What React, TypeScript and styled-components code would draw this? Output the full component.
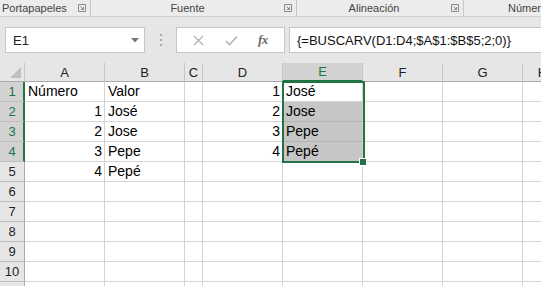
import React from 'react'
import styled, { createGlobalStyle } from 'styled-components'

const GREEN = '#217346'

const Global = createGlobalStyle`
  html, body {
    margin: 0;
    padding: 0;
    background: #e6e6e6;
    overflow: hidden;
  }
  body {
    font-family: "Liberation Sans", Arial, sans-serif;
  }
`

const Screen = styled.div`
  width: 541px;
  height: 286px;
  display: flex;
  flex-direction: column;
  background: #e6e6e6;
  overflow: hidden;
`

const RibbonLabels = styled.div`
  display: flex;
  height: 16px;
  border-bottom: 1px solid #d0d0d0;
  background: #ececec;
  flex-shrink: 0;
`

const Group = styled.div<{ $w: number }>`
  width: ${p => p.$w}px;
  flex-shrink: 0;
  display: flex;
  align-items: center;
  height: 100%;
  border-right: 1px solid #c8c8c8;
  box-sizing: border-box;
  padding-right: 4px;
  &:last-child {
    border-right: none;
  }
`

const GroupLabel = styled.span<{ $left?: boolean; $indent?: number }>`
  flex: 1;
  font-size: 11px;
  color: #444;
  text-align: ${p => (p.$left ? 'left' : 'center')};
  padding-left: ${p => p.$indent ?? 0}px;
  white-space: nowrap;
  line-height: 14px;
`

const Launcher = () => (
  <svg width="8" height="8" viewBox="0 0 8 8" style={{ flexShrink: 0 }}>
    <path d="M0.5 0.5H7.5V7.5H0.5Z" fill="none" stroke="#8a8a8a" />
    <path d="M2.5 2.5L5.5 5.5M5.5 3V5.5H3" fill="none" stroke="#8a8a8a" />
  </svg>
)

const FormulaRow = styled.div`
  display: flex;
  align-items: center;
  height: 46px;
  padding-left: 5px;
  box-sizing: border-box;
  flex-shrink: 0;
`

const NameBox = styled.div`
  width: 140px;
  height: 26px;
  box-sizing: border-box;
  background: #fff;
  border: 1px solid #c6c6c6;
  display: flex;
  align-items: center;
  justify-content: space-between;
  padding: 0 5px 0 7px;
  font-size: 13px;
  color: #222;
`

const Grip = styled.div`
  width: 31px;
  display: flex;
  flex-direction: column;
  align-items: center;
  gap: 3px;
  span {
    width: 2px;
    height: 2px;
    background: #a8a8a8;
  }
`

const ButtonBox = styled.div`
  width: 109px;
  height: 26px;
  box-sizing: border-box;
  background: #fff;
  border: 1px solid #c6c6c6;
  display: flex;
  align-items: center;
  justify-content: space-around;
  padding: 0 6px;
`

const Fx = styled.span`
  font-family: "Liberation Serif", "Times New Roman", serif;
  font-style: italic;
  font-weight: bold;
  font-size: 13px;
  color: #6a6a6a;
  letter-spacing: -0.5px;
`

const FormulaInput = styled.div`
  flex: 1;
  height: 26px;
  margin-left: 4px;
  box-sizing: border-box;
  background: #fff;
  border: 1px solid #c6c6c6;
  border-right: none;
  display: flex;
  align-items: center;
  padding-left: 7px;
  font-size: 13px;
  color: #111;
  white-space: nowrap;
`

const Sheet = styled.div`
  position: relative;
  display: grid;
  grid-template-columns: 25px 80px 80px 18px 80px 80px 80px 80px 40px;
  grid-auto-rows: 20px;
  grid-template-rows: 19px;
  background: #fff;
`

const Corner = styled.div`
  background: #e6e6e6;
  border-right: 1px solid #c6c6c6;
  border-bottom: 1px solid #ababab;
  box-sizing: border-box;
  position: relative;
  &::after {
    content: '';
    position: absolute;
    right: 3px;
    bottom: 3px;
    border-style: solid;
    border-width: 0 0 11px 11px;
    border-color: transparent transparent #c0c0c0 transparent;
  }
`

const ColHead = styled.div<{ $active?: boolean }>`
  box-sizing: border-box;
  background: ${p => (p.$active ? '#d2d2d2' : '#e6e6e6')};
  border-right: 1px solid #c6c6c6;
  border-bottom: ${p => (p.$active ? `2px solid ${GREEN}` : '1px solid #ababab')};
  color: ${p => (p.$active ? GREEN : '#222')};
  font-size: 13px;
  display: flex;
  align-items: center;
  justify-content: center;
`

const RowHead = styled.div<{ $active?: boolean }>`
  box-sizing: border-box;
  background: ${p => (p.$active ? '#d2d2d2' : '#e6e6e6')};
  border-right: ${p => (p.$active ? `2px solid ${GREEN}` : '1px solid #ababab')};
  border-bottom: 1px solid #bdbdbd;
  color: ${p => (p.$active ? GREEN : '#222')};
  font-size: 13px;
  display: flex;
  align-items: center;
  justify-content: center;
  padding-left: ${p => (p.$active ? '1px' : '0')};
`

const Cell = styled.div<{ $num?: boolean; $sel?: boolean }>`
  box-sizing: border-box;
  background: ${p => (p.$sel ? '#c6c6c6' : '#fff')};
  border-right: 1px solid #d4d4d4;
  border-bottom: 1px solid ${p => (p.$sel ? '#b4b4b4' : '#d4d4d4')};
  font-size: 14px;
  color: #000;
  display: flex;
  align-items: flex-end;
  justify-content: ${p => (p.$num ? 'flex-end' : 'flex-start')};
  padding: 0 2px 2px 3px;
  white-space: nowrap;
  overflow: hidden;
`

const Selection = styled.div`
  position: absolute;
  left: 282px;
  top: 18px;
  width: 83px;
  height: 82px;
  box-sizing: border-box;
  border: 2px solid ${GREEN};
  pointer-events: none;
`

const Handle = styled.div`
  position: absolute;
  left: 360px;
  top: 96px;
  width: 6px;
  height: 6px;
  background: ${GREEN};
  outline: 1px solid #fff;
`

const cols = ['A', 'B', 'C', 'D', 'E', 'F', 'G', 'H']

type Row = Record<string, string | number>

const data: Row[] = [
  { A: 'Número', B: 'Valor', D: 1, E: 'José' },
  { A: 1, B: 'José', D: 2, E: 'Jose' },
  { A: 2, B: 'Jose', D: 3, E: 'Pepe' },
  { A: 3, B: 'Pepe', D: 4, E: 'Pepé' },
  { A: 4, B: 'Pepé' },
  {}, {}, {}, {}, {}, {},
]

export default function App() {
  return (
    <>
      <Global />
      <Screen>
        <RibbonLabels>
          <Group $w={91}>
            <GroupLabel $left $indent={2}>Portapapeles</GroupLabel>
            <Launcher />
          </Group>
          <Group $w={206}>
            <GroupLabel>Fuente</GroupLabel>
            <Launcher />
          </Group>
          <Group $w={167}>
            <GroupLabel>Alineación</GroupLabel>
            <Launcher />
          </Group>
          <Group $w={120}>
            <GroupLabel $left $indent={44}>Número</GroupLabel>
          </Group>
        </RibbonLabels>

        <FormulaRow>
          <NameBox>
            <span>E1</span>
            <svg width="8" height="5" viewBox="0 0 8 5">
              <path d="M0 0H8L4 4.5Z" fill="#777" />
            </svg>
          </NameBox>
          <Grip>
            <span />
            <span />
            <span />
          </Grip>
          <ButtonBox>
            <svg width="11" height="11" viewBox="0 0 11 11">
              <path d="M1 1L10 10M10 1L1 10" stroke="#b4b4b4" strokeWidth="1.3" />
            </svg>
            <svg width="13" height="11" viewBox="0 0 13 11">
              <path d="M1 6L4.5 9.5L12 1.5" fill="none" stroke="#b4b4b4" strokeWidth="1.6" />
            </svg>
            <Fx>fx</Fx>
          </ButtonBox>
          <FormulaInput>{'{=BUSCARV(D1:D4;$A$1:$B$5;2;0)}'}</FormulaInput>
        </FormulaRow>

        <Sheet>
          <Corner />
          {cols.map(c => (
            <ColHead key={c} $active={c === 'E'}>
              {c}
            </ColHead>
          ))}
          {data.map((row, i) => (
            <React.Fragment key={i}>
              <RowHead $active={i < 4}>{i + 1}</RowHead>
              {cols.map(c => {
                const v = row[c]
                return (
                  <Cell key={c} $num={typeof v === 'number'} $sel={c === 'E' && i > 0 && i < 4}>
                    {v}
                  </Cell>
                )
              })}
            </React.Fragment>
          ))}
          <Selection />
          <Handle />
        </Sheet>
      </Screen>
    </>
  )
}
